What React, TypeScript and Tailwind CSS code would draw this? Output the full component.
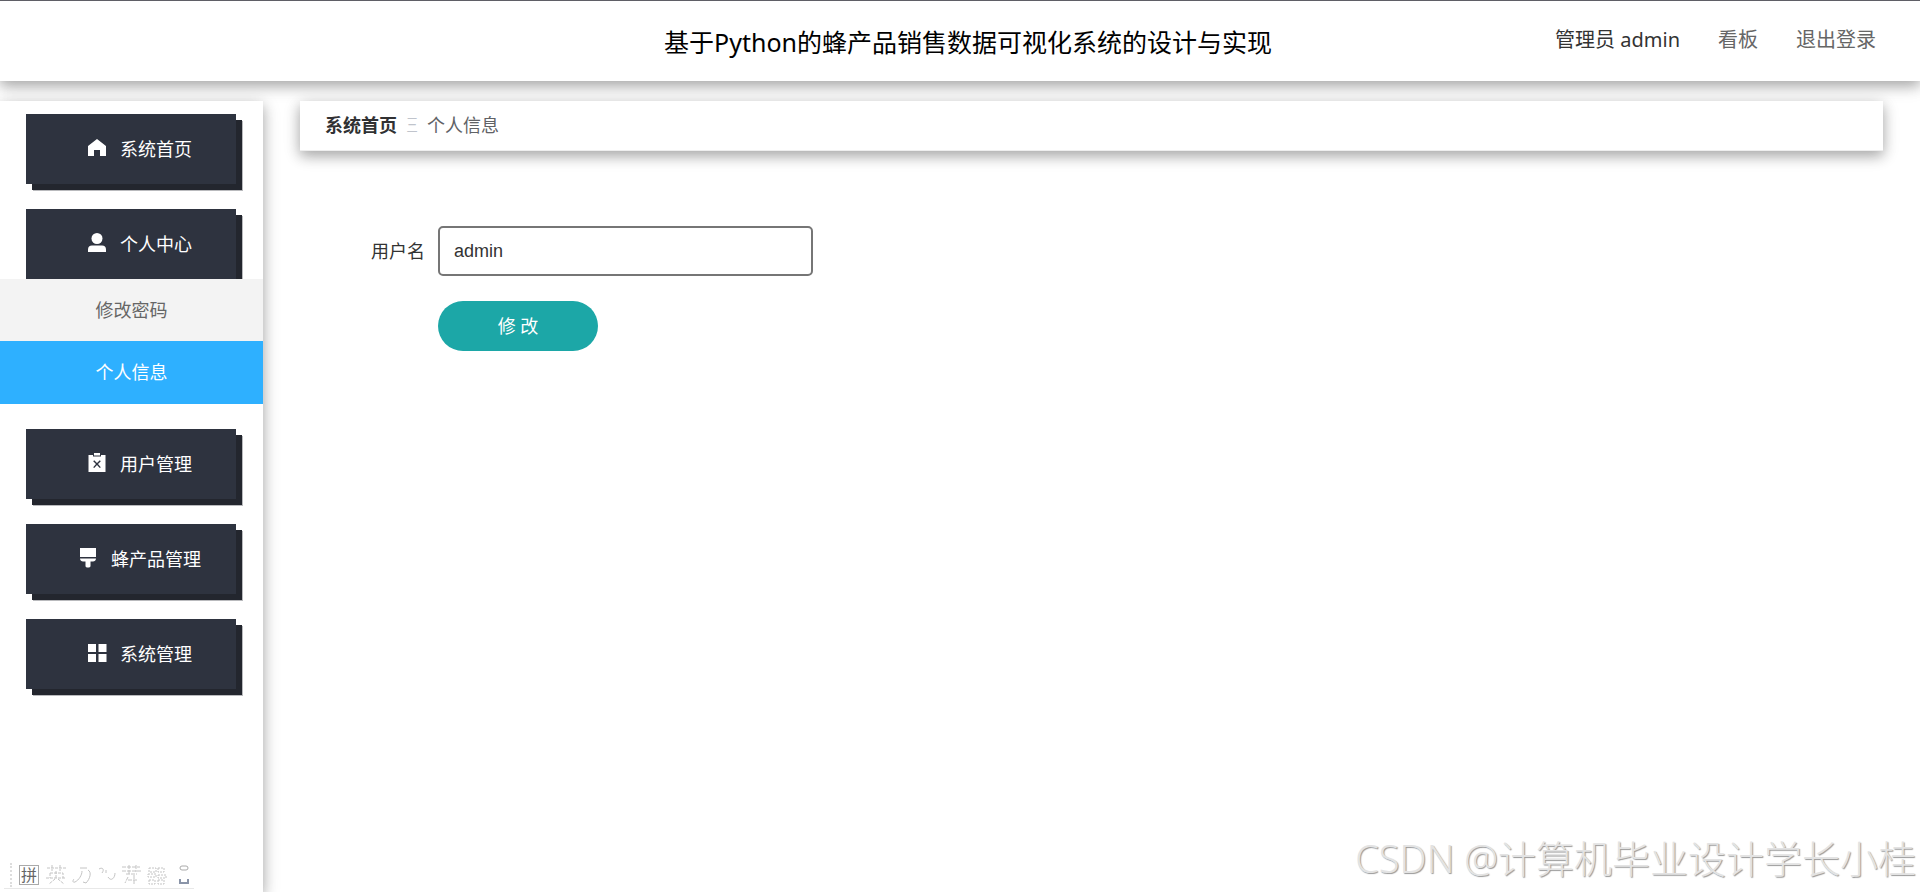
import React from "react";
import clsx from "clsx";

interface MenuItem {
  title: string;
  icon: React.ReactNode;
  children?: { title: string; active?: boolean }[];
}

const menus: MenuItem[] = [
  {
    title: "系统首页",
    icon: <path d="M9 1 18 8v10h-6v-6H6v6H0V8z" />,
  },
  {
    title: "个人中心",
    icon: (
      <>
        <circle cx="9" cy="5.5" r="5.5" />
        <path d="M0 19v-2.5C0 14 1.5 12.500 4 12.500h10c2.500 0 4 1.500 4 4V19z" />
      </>
    ),
    children: [{ title: "修改密码" }, { title: "个人信息", active: true }],
  },
  {
    title: "用户管理",
    icon: (
      <>
        <path d="M6 0h6v2.500H6z" />
        <path
          fillRule="evenodd"
          d="M0.500 2H5v1.500h8V2h4.500v17H0.500zM5.200 8.200 8 11l-2.800 3.200 1 .9L9 12l2.800 3.100 1-.9L10 11l2.800-2.800-1-1L9 10 6.200 7.200z"
        />
      </>
    ),
  },
  {
    title: "蜂产品管理",
    icon: (
      <path d="M1 0h16v9H1zM1 10.500h16c0 2-1.500 3-3 3h-2.500V18c0 2-5 2-5 0v-4.500H4c-1.500 0-3-1-3-3z" />
    ),
  },
  {
    title: "系统管理",
    icon: <path d="M0 1h8v8H0zM10.500 1h8v8h-8zM0 11h8v8H0zM10.500 11h8v8h-8z" />,
  },
];

function Header() {
  return (
    <header className="grid h-[81px] grid-cols-[1fr_auto_1fr] border-t border-[#5f5f66] bg-white pl-[60px] pr-11 shadow-[0_5px_12px_0_rgba(0,0,0,0.24),0_4px_18px_0_rgba(0,0,0,0.16)]">
      <h1 className="col-start-2 self-center pt-0.5 text-[25px] leading-9 text-black">
        基于Python的蜂产品销售数据可视化系统的设计与实现
      </h1>
      <nav className="flex items-center justify-end gap-[38px] pb-0.5 text-xl text-[#666]">
        <span className="text-[#333]">管理员 admin</span>
        <a href="#board">看板</a>
        <a href="#logout">退出登录</a>
      </nav>
    </header>
  );
}

function Sidebar() {
  return (
    <aside className="flex w-[263px] shrink-0 flex-col justify-between bg-white pt-[13px] shadow-[0_5px_12px_0_rgba(0,0,0,0.24),0_4px_18px_0_rgba(0,0,0,0.16)]">
      <ul className="flex flex-col gap-[25px]">
        {menus.map((menu) => (
          <li key={menu.title}>
            <button
              type="button"
              className="ml-[26px] flex h-[70px] w-[210px] items-center justify-center gap-[14px] bg-[#2e333f] pl-[18px] text-lg text-white shadow-[6px_6px_0_#23262e,7px_7px_0_#b9babd]"
            >
              <svg
                viewBox="0 0 18 20"
                className="mb-0.5 h-5 w-[18px] overflow-visible fill-white"
                aria-hidden="true"
              >
                {menu.icon}
              </svg>
              <span>{menu.title}</span>
            </button>
            {menu.children && (
              <ul className="relative text-center text-lg">
                {menu.children.map((child) => (
                  <li key={child.title}>
                    <a
                      href="#child"
                      className={clsx(
                        "block",
                        child.active
                          ? "bg-[#2eb0ff] leading-[63px] text-white"
                          : "bg-[#f3f3f3] leading-[62px] text-[#666]"
                      )}
                    >
                      {child.title}
                    </a>
                  </li>
                ))}
              </ul>
            )}
          </li>
        ))}
      </ul>
      <InputMethodBar />
    </aside>
  );
}

function InputMethodBar() {
  return (
    <div className="mb-[3px] ml-1 flex h-[27px] w-[190px] items-center gap-[7px] border-b border-[#e8e8e8] pl-[6px] text-[#bbb]">
      <span className="h-6 border-l-2 border-dotted border-[#ddd]" />
      <span className="flex h-5 w-5 shrink-0 items-center justify-center border border-[#aaa] text-base leading-none text-[#666]">
        拼
      </span>
      <svg
        viewBox="0 0 122 20"
        className="h-5 w-[122px] shrink-0 fill-none stroke-[#c4c4c4]"
        aria-hidden="true"
      >
        <path
          strokeDasharray="3 1"
          d="M1 3h19M6 0v6M14 0v6M4 8h13v5M4 8v5M0 13h20M10 6v7M9 14l-6 5M12 14l6 5"
        />
        <path d="M34 3h7M42 5c4 2 2 9-2 13l-3-1M36 6c0 4-3 9-7 11-3 1-2-2-1-3" />
        <path d="M53 4c3-2 6 0 3 4M62 12c3 5 7 1 7-4M60 5v3" />
        <path
          strokeDasharray="4 1"
          d="M76 2h18M76 6h19M80 9h11M83 0v9M90 0v7M82 12l-3 6M88 10v9M82 15h10"
        />
        <path
          strokeDasharray="2 1"
          d="M103 3h7v4h-7zM112 3h6v4h-6zM102 9h8v3h-8zM112 10h8v3h-8zM103 15h6v4h-6zM112 15h6v4h-6z"
        />
      </svg>
      <svg
        viewBox="0 0 10 20"
        className="ml-1 h-5 w-2.5 shrink-0 fill-none"
        aria-hidden="true"
      >
        <rect x="1" y="1" width="8" height="4" rx="2" stroke="#aaa" />
        <path d="M1 14v4h8v-4" stroke="#8a94a8" strokeWidth="2" />
      </svg>
    </div>
  );
}

function Breadcrumb() {
  return (
    <nav className="flex h-[50px] items-center border-b border-[#eee] bg-white px-[25px] pb-0.5 text-lg shadow-[0_5px_12px_0_rgba(0,0,0,0.24),0_4px_18px_0_rgba(0,0,0,0.16)]">
      <a href="#home" className="font-bold text-[#303133]">
        系统首页
      </a>
      <span className="w-[30px] text-center text-xl font-light text-[#c0c4cc]">
        Ξ
      </span>
      <span className="text-[#606266]">个人信息</span>
    </nav>
  );
}

function ProfileForm() {
  return (
    <form
      className="mt-[75px] grid grid-cols-[125px_375px] gap-x-[13px] gap-y-[25px] text-lg"
      onSubmit={(e) => e.preventDefault()}
    >
      <label htmlFor="username" className="self-center text-right text-[#333]">
        用户名
      </label>
      <input
        id="username"
        type="text"
        defaultValue="admin"
        className="h-[50px] w-full rounded-[5px] border-2 border-[#767676] bg-white px-[14px] font-['Liberation_Sans',sans-serif] text-[#333] outline-none"
      />
      <button
        type="submit"
        className="col-start-2 h-[50px] w-40 rounded-full bg-[#1ca7a7] text-white"
      >
        修 改
      </button>
    </form>
  );
}

export default function App() {
  return (
    <div className="relative flex min-h-screen flex-col overflow-hidden bg-white font-['Noto_Sans','Noto_Sans_CJK_SC',sans-serif]">
      <Header />
      <div className="mt-5 flex flex-1">
        <Sidebar />
        <main className="mx-[37px] flex-1">
          <Breadcrumb />
          <ProfileForm />
        </main>
      </div>
      <div className="absolute bottom-1.5 right-1 text-[38px] font-light leading-[56px] text-[#e3e3e3] [text-shadow:1px_1px_1px_#999]">
        CSDN @计算机毕业设计学长小桂
      </div>
    </div>
  );
}
